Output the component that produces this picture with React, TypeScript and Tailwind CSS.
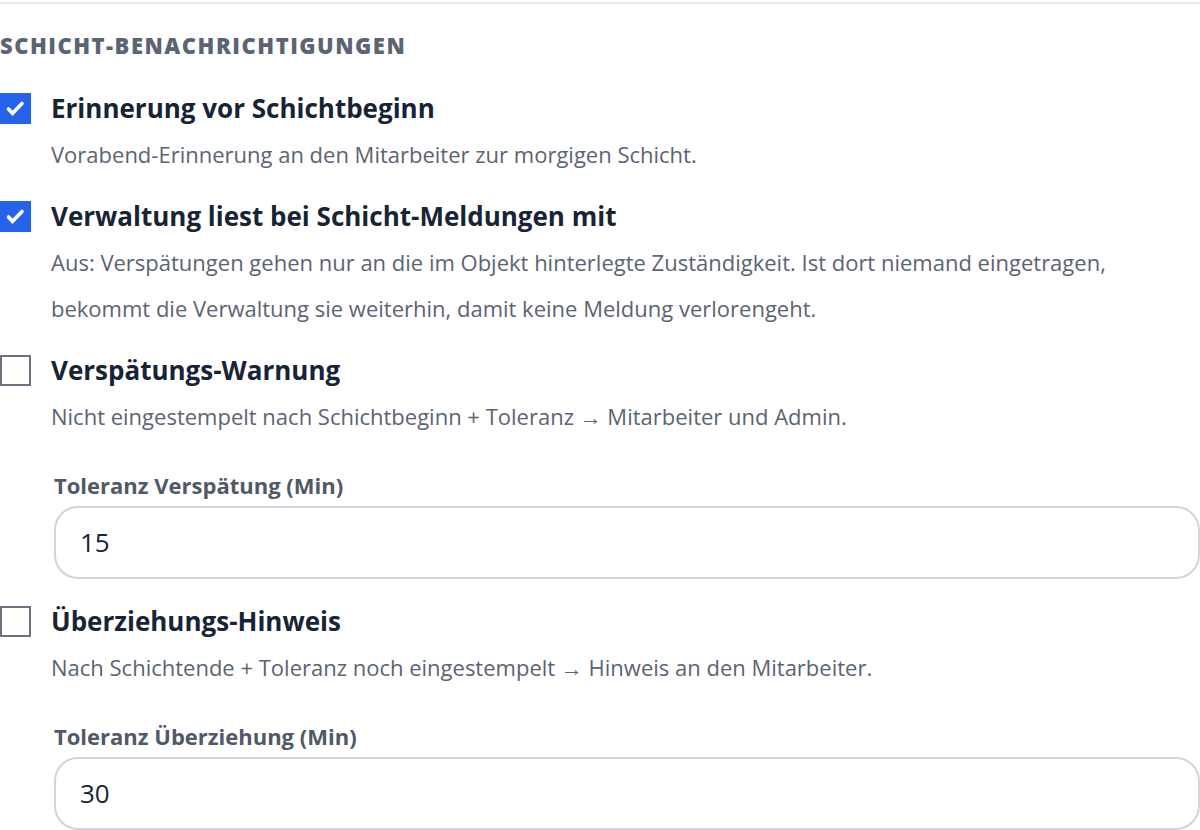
import React, { useState } from "react";

type Setting = {
  id: string;
  title: string;
  hint: string;
  checked: boolean;
  tolerance?: { label: string; value: string };
};

const settings: Setting[] = [
  {
    id: "erinnerung",
    title: "Erinnerung vor Schichtbeginn",
    hint: "Vorabend-Erinnerung an den Mitarbeiter zur morgigen Schicht.",
    checked: true,
  },
  {
    id: "verwaltung",
    title: "Verwaltung liest bei Schicht-Meldungen mit",
    hint: "Aus: Verspätungen gehen nur an die im Objekt hinterlegte Zuständigkeit. Ist dort niemand eingetragen, bekommt die Verwaltung sie weiterhin, damit keine Meldung verlorengeht.",
    checked: true,
  },
  {
    id: "verspaetung",
    title: "Verspätungs-Warnung",
    hint: "Nicht eingestempelt nach Schichtbeginn + Toleranz → Mitarbeiter und Admin.",
    checked: false,
    tolerance: { label: "Toleranz Verspätung (Min)", value: "15" },
  },
  {
    id: "ueberziehung",
    title: "Überziehungs-Hinweis",
    hint: "Nach Schichtende + Toleranz noch eingestempelt → Hinweis an den Mitarbeiter.",
    checked: false,
    tolerance: { label: "Toleranz Überziehung (Min)", value: "30" },
  },
];

const SettingRow: React.FC<{ item: Setting }> = ({ item }) => {
  const [checked, setChecked] = useState(item.checked);

  return (
    <li>
      <div className="flex items-start gap-5">
        <span className="mt-2 grid h-[31px] w-[31px] shrink-0">
          <input
            type="checkbox"
            id={item.id}
            checked={checked}
            onChange={() => setChecked(!checked)}
            className="peer col-start-1 row-start-1 appearance-none border-2 border-[#6b7280] bg-white checked:border-[#2563eb] checked:bg-[#2563eb]"
          />
          <svg
            viewBox="0 0 31 31"
            aria-hidden="true"
            className="pointer-events-none invisible col-start-1 row-start-1 peer-checked:visible"
          >
            <path
              d="M8.5 16l4 4.3L22 10.5"
              fill="none"
              stroke="white"
              strokeWidth="3.6"
              strokeLinecap="round"
            />
          </svg>
        </span>
        <div className="min-w-0 flex-1">
          <label htmlFor={item.id} className="block text-[26px] leading-[46px] font-bold text-[#172436]">
            {item.title}
          </label>
          <p className="text-[22px] leading-[46px] text-[#5b6472]">{item.hint}</p>
        </div>
      </div>
      {item.tolerance && (
        <div className="mt-[26px] mb-[3px] ml-[54px]">
          <label
            htmlFor={`${item.id}-min`}
            className="block text-[22px] leading-[41px] font-bold text-[#4f5968]"
          >
            {item.tolerance.label}
          </label>
          <input
            id={`${item.id}-min`}
            type="text"
            inputMode="numeric"
            defaultValue={item.tolerance.value}
            className="block h-[73px] w-full rounded-3xl border-2 border-[#d1d5db] bg-white px-6 pb-0.5 text-[26px] text-[#172436]"
          />
        </div>
      )}
    </li>
  );
};

export default function App() {
  return (
    <div className="bg-white pt-0.5 font-['Open_Sans','Noto_Sans',sans-serif]">
      <section className="border-t-2 border-[#e2e8f0] pt-6">
        <h2 className="text-[22px] leading-[34px] font-extrabold tracking-[1.5px] text-[#5b6472] uppercase">
          Schicht-Benachrichtigungen
        </h2>
        <ul className="mt-[23px] flex flex-col gap-4">
          {settings.map((item) => (
            <SettingRow key={item.id} item={item} />
          ))}
        </ul>
      </section>
    </div>
  );
}
